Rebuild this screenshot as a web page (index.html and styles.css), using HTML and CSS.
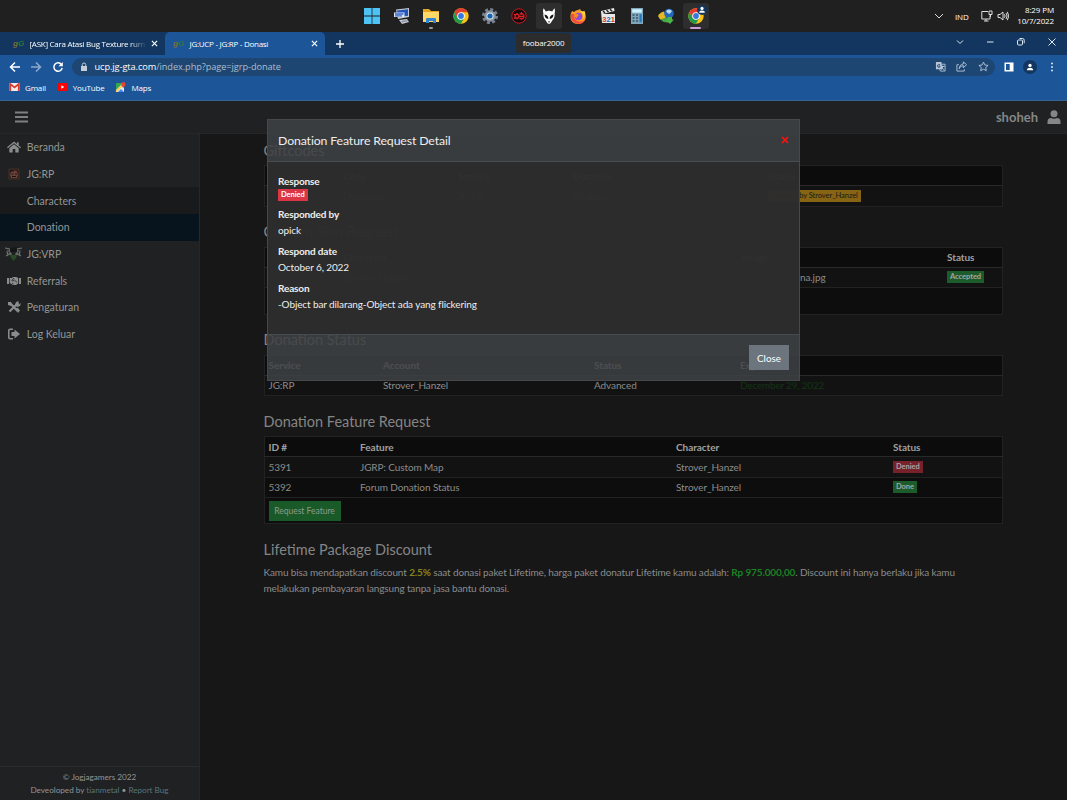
FILE: index.html
```html
<!DOCTYPE html>
<html lang="id">
<head>
  <meta charset="UTF-8">
  <meta name="viewport" content="width=device-width, initial-scale=1.0">
  <title>JG:UCP - JG:RP - Donasi</title>
  <link rel="stylesheet" href="styles.css">
</head>
<body>

<!-- Taskbar -->
<div class="taskbar">
  <div class="apps">
    <span class="app"><svg viewBox="0 0 16 16"><path fill="#4cc2f5" d="M0 0h7.6v7.6H0zM8.4 0H16v7.6H8.4zM0 8.4h7.6V16H0zM8.4 8.4H16V16H8.4z"/></svg></span>
    <span class="app"><svg viewBox="0 0 16 16"><path fill="#c5c9d2" d="M2 1.500l13-1.500v9l-11 2zM5 12l8-1 2 3-7 2z"/><path fill="#2454bd" d="M3 2.500l11-1.300v6.500L4 9z"/><path fill="#dfe6f5" d="M0 4.500h10.500V9H0z"/><path stroke="#3466c6" stroke-width="1.300" d="M1 6h8.500M1 7.800h7"/><path fill="#8d96a8" d="M7 13l6-1 .7 1.200-5.700 1.300z"/></svg></span>
    <span class="app"><svg viewBox="0 0 16 16"><path fill="#e8a51f" d="M0 1h6l2 2h8v5H0z"/><path fill="#ffd766" d="M0 4h16v10H0z"/><path fill="#3284d4" d="M3 15v-4q0-1 1-1h8q1 0 1 1v4h-3v-2H6v2z"/></svg><i class="running"></i></span>
    <span class="app"><svg viewBox="0 0 16 16"><use href="#chrome"/></svg></span>
    <span class="app"><svg viewBox="0 0 16 16"><circle cx="8" cy="8" r="6.6" fill="none" stroke="#75818f" stroke-width="2.8" stroke-dasharray="3 2.18"/><circle cx="8" cy="8" r="5.8" fill="#8793a0"/><circle cx="8" cy="8" r="3.5" fill="#e8eef4"/><circle cx="8" cy="8" r="2.6" fill="#1764ae"/></svg></span>
    <span class="app"><svg viewBox="0 0 16 16"><circle cx="8" cy="8" r="7.200" fill="#160a0b" stroke="#c41c23"/><g fill="none" stroke="#dc2228" stroke-width="1.300"><circle cx="6" cy="8.300" r="1.900"/><path d="M3 6.300l1.500.5M3 10.300l1.500-.6M6 5v1.500M6 10v1.600M7.500 8.300H13M8.500 6h4M8.500 10.500h4M10.500 4v2.500M10.500 10v1.800M12.800 6.500v3.500"/></g></svg></span>
    <span class="app open"><svg viewBox="0 0 16 16"><path fill="#fff" d="M2.700.3L4.800 3.500Q8 2.200 11.200 3.500L13.300.3Q14.500 2.500 13.600 5.500 14.300 9.500 11.300 12.500L9.500 15.300Q8 16.300 6.500 15.300L4.700 12.500Q1.700 9.500 2.400 5.500 1.500 2.500 2.700.3z"/><path fill="#151515" d="M3.500 6.500Q7.500 7 7.300 11 3.800 10.700 3.500 6.500zM12.500 6.500Q8.500 7 8.700 11 12.200 10.700 12.500 6.500zM7 13.400h2v.8H7z"/></svg></span>
    <span class="app"><svg viewBox="0 0 16 16"><path fill="#ff9a22" d="M2 3l2 1q2-2 4-2l2-1q0 2 2 3l2-1q3 5 1 9-2 4-7 4-5 0-7-4Q-.5 7 2 3z"/><path fill="#f34b42" d="M1 6q-1 8 7 10 5 0 7-4-4 3-8 1-4-2-3-7z"/><circle cx="8.500" cy="8.500" r="3.800" fill="#8b4ce0"/><path fill="#ffd43f" d="M10 1q0 3 2.500 4.500Q14 8 12.500 11q4-3 2-8l-1.500.5Q10.500 3 10 1z"/><path fill="#ff8a1f" d="M4 6q3-1 5 1-2 1-2 3-3-1-3-4z"/></svg></span>
    <span class="app"><svg viewBox="0 0 16 16"><path fill="#e8e8e8" d="M1 3l13-3 .5 3-12 3H15v9H2z"/><path stroke="#262626" stroke-width="1.500" d="M3 3l2 2M6.500 2l2 2M10 1.200l2 2"/><text x="2.300" y="13.500" class="clap"><tspan fill="#d23c2d">3</tspan><tspan fill="#2b67c2">2</tspan><tspan fill="#d23c2d">1</tspan></text></svg></span>
    <span class="app"><svg viewBox="0 0 16 16"><path fill="#7fa6bb" d="M2 0h12v16H2z"/><path fill="#cef0ff" d="M3.200 1.200h9.600v3.500H3.200z"/><path stroke="#37566c" stroke-width="1.700" stroke-dasharray="2 1.500" d="M3.500 7h6M3.500 10h6M3.500 13h6"/><path fill="#2378bb" d="M10.500 6.200h2.200v8h-2.200z"/></svg></span>
    <span class="app"><svg viewBox="0 0 16 16"><path fill="#e5b921" d="M0 8q2-4 6-4.500L9 9l-5 3Q1 11 0 8z"/><path fill="#4da446" d="M2 11q3 .5 5-1.500l5 1.500 1 3q-7 2-11-3z"/><circle cx="11" cy="5.500" r="4.800" fill="#2567b9"/><path fill="#b9dcf5" d="M8 3q3-3 6 0l-2 2.500q-2 1-4-2.500z"/><path fill="#49b64a" d="M9.500 9H14v2.500h2L12 16l-4.500-4.500h2z"/></svg></span>
    <span class="app open"><svg viewBox="0 0 16 16"><use href="#chrome"/></svg><b class="user-badge"><svg viewBox="0 0 10 10"><circle cx="5" cy="3" r="2" fill="#fff"/><path fill="#fff" d="M1.500 8.500q0-3 3.500-3t3.500 3z"/></svg></b><i class="running active"></i></span>
  </div>
  <div class="tray">
    <svg class="i-chev" viewBox="0 0 10 10"><path d="M1 3l4 4 4-4"/></svg>
    <span class="lang">IND</span>
    <svg class="i-net" viewBox="0 0 12 12"><path d="M7 1.500H.8v7.500H9V5.500M3 11h4.500M5 9v2M8 1h3v3.500H8zM9.500 4.500V7"/></svg>
    <svg class="i-vol" viewBox="0 0 12 12"><path d="M1 4.500h2L6 2v8L3 7.500H1zM7.500 4.300q1.200 1.700 0 3.400M9 3q2.300 3 0 6M10.300 1.800q3 4.200 0 8.400"/></svg>
    <div class="clock">8:29 PM<br>10/7/2022</div>
  </div>
  <div class="tooltip">foobar2000</div>
</div>

<!-- Browser -->
<div class="tabs">
  <div class="tab">
    <span class="favicon"><em>g</em>G</span>
    <span class="tab-title fade">[ASK] Cara Atasi Bug Texture rum</span>
    <svg class="x" viewBox="0 0 8 8"><path d="M1 1l6 6M7 1L1 7"/></svg>
  </div>
  <div class="tab current">
    <span class="favicon"><em>g</em>G</span>
    <span class="tab-title">JG:UCP - JG:RP - Donasi</span>
    <svg class="x" viewBox="0 0 8 8"><path d="M1 1l6 6M7 1L1 7"/></svg>
  </div>
  <svg class="plus" viewBox="0 0 10 10"><path d="M5 1v8M1 5h8"/></svg>
  <div class="win">
    <svg viewBox="0 0 10 10"><path d="M2 3.500l3 3 3-3"/></svg>
    <svg viewBox="0 0 10 10"><path d="M2 5h6.500"/></svg>
    <svg viewBox="0 0 10 10"><rect x="1.500" y="3" width="5" height="5" rx="1"/><path d="M3.500 1.500h3q1.700 0 1.700 1.700v3"/></svg>
    <svg viewBox="0 0 10 10"><path d="M1.500 1.500l7 7M8.500 1.500l-7 7"/></svg>
  </div>
</div>
<div class="toolbar">
  <svg class="nav" viewBox="0 0 12 12"><path d="M11 6H2M6 1.500L1.500 6 6 10.500"/></svg>
  <svg class="nav off" viewBox="0 0 12 12"><path d="M1 6h9M6 1.500L10.500 6 6 10.500"/></svg>
  <svg class="nav" viewBox="0 0 12 12"><path d="M9.500 3.500A4.200 4.200 0 1 0 10.200 7"/><path class="solid" d="M10.800 1v4.200H6.500z"/></svg>
  <div class="address">
    <svg class="lock" viewBox="0 0 8 10"><path fill="#c4ccd6" d="M1 4h6v5H1z"/><path fill="none" stroke="#c4ccd6" d="M2.300 4V2.500q0-1.500 1.700-1.500t1.700 1.500V4"/></svg>
    <span class="url"><b>ucp.jg-gta.com</b>/index.php?page=jgrp-donate</span>
    <svg class="act" viewBox="0 0 12 12"><path class="pale" d="M1 1h6l1 8H1z"/><path d="M7 3.500h4v7.500H6l-1-2M7 6h3.500M8.500 5v1q0 2-2 3.500M7.500 7q1 2 2.500 2.500"/><path stroke="#1c4777" d="M5.500 4H4Q2.500 4 2.700 5.500 3 7 4.500 7q1.200-.5 1-1.500H4.200"/></svg>
    <svg class="act" viewBox="0 0 12 12"><path d="M3 4H1v7h8V9M3.500 8.500Q4 5 8 5V7.500L11.500 4 8 1v2.200Q4 3.500 3.500 8.500z"/></svg>
    <svg class="act" viewBox="0 0 12 12"><path d="M6 1.200l1.500 3.200 3.500.4-2.600 2.300.7 3.500L6 8.900l-3.100 1.700.7-3.500L1 4.800l3.500-.4z"/></svg>
  </div>
  <svg class="tool" viewBox="0 0 10 10"><path fill="#fff" d="M.5.500h9v9h-9zM2 2v6h3.700V2z" fill-rule="evenodd"/></svg>
  <span class="profile"><svg viewBox="0 0 10 10"><circle cx="5" cy="3" r="2.100" fill="#fff"/><path fill="#fff" d="M1 9q0-3.200 4-3.200T9 9z"/></svg></span>
  <svg class="tool" viewBox="0 0 10 10"><path fill="#fff" d="M4.200.7h1.600v1.600H4.200zM4.200 4.200h1.600v1.600H4.200zM4.200 7.700h1.600v1.600H4.200z"/></svg>
</div>
<div class="bookmarks">
  <a><svg viewBox="0 0 11 10"><path fill="#eee" d="M.5 1h10v8H.5z"/><path fill="none" stroke="#dd3b30" stroke-width="1.700" d="M1.300 9V2l4.200 3.500L9.700 2v7"/></svg>Gmail</a>
  <a><svg viewBox="0 0 11 10"><rect y="1" width="11" height="8" rx="2" fill="#f00"/><path fill="#fff" d="M4.300 3.200v3.600l3-1.800z"/></svg>YouTube</a>
  <a><svg viewBox="0 0 11 10"><path fill="#e6e9ec" d="M1 1h8v9H1z"/><path fill="#35a652" d="M1 1h7L1 8z"/><path fill="#4284f4" d="M3 10l3-3 3 3z"/><path stroke="#ffca28" stroke-width="1.500" d="M1 9.500L8 2.500"/><path fill="#e94335" d="M8.300 6Q5.800 3.300 6.200 2q.5-2 2.200-2t2.200 2q.2 1.300-2.300 4z"/></svg>Maps</a>
</div>

<!-- Page -->
<div class="page">
  <div class="topbar">
    <svg class="burger" viewBox="0 0 13 12"><path fill="#7e8081" d="M0 .5h13v2H0zM0 5h13v2H0zM0 9.500h13v2H0z"/></svg>
    <div class="account">shoheh <svg viewBox="0 0 14 14"><circle cx="7" cy="3.700" r="3.500"/><path d="M.5 14v-2q0-4 3.500-4 3 1.300 6 0 3.500 0 3.500 4v2z"/></svg></div>
  </div>

  <div class="main">
    <div class="sidebar">
      <ul class="menu">
        <li><svg viewBox="0 0 14 12"><path d="M7 .500L0 6.300l.8 1L7 2.200l6.200 5.100.8-1-2.300-1.900V1.200H10V3zM7 3.300L2.300 7.200V11.500H5.700V8h2.600v3.500h3.400V7.200z"/></svg>Beranda</li>
        <li><svg viewBox="0 0 14 12"><path fill="#301b16" stroke="#553a31" stroke-width=".7" d="M2 1h10v10H2z"/><path fill="#68443a" d="M4 3.500q3-2 6 0l1 3-1 3.500H4L3 6.500z"/><path stroke="#1c1110" d="M3 3h4M4.500 6h2M8 6h2M5 8.500h4"/></svg>JG:RP</li>
        <li class="sub">Characters</li>
        <li class="sub selected">Donation</li>
        <li><svg class="wide" viewBox="0 0 17 14"><path fill="none" stroke="#747474" stroke-width="1.200" d="M0 1l5 1 4 1 3-1 5-1M1.500 4h4M11 4h4.500M2 5l1 3-2 1M15 5l-1 3 2 1M3 7h4M10 7h4M5 2v6M12 2v6"/><path fill="#141816" d="M5 1l7-1v5H5z"/><path fill="#294a26" d="M5 8h7l-1 3-2.500 3L6 11z"/></svg>JG:VRP</li>
        <li><svg viewBox="0 0 14 12"><path d="M0 3h2v6H0zM12 3h2v6h-2zM2.700 3h2l1.500-1h3l2 1v5.500L9 10H6L2.700 8z"/><path fill="none" stroke="#202223" stroke-width=".8" d="M7 3L4.800 5.500q1 1.200 2.700-.4L10 7.500M5 8l1.500 1"/></svg>Referrals</li>
        <li><svg viewBox="0 0 14 12"><path fill="none" stroke="#8b8c8c" stroke-width="2.200" d="M2.500 1.500l8 8.500M11.500 1.500l-9 9"/><path d="M9 1l3-1-1.500 2L12 3.500 14 2l-1 3-3 1-2-2zM1 1h3l1 3-1 1-3-1zM8.500 8l2-1.500L13 9.500 11 12z"/></svg>Pengaturan</li>
        <li><svg viewBox="0 0 14 12"><path d="M6 2H3.500Q2.500 2 2.500 3v6q0 1 1 1H6v1.500H3Q1 11.500 1 9.500v-7Q1 .5 3 .5h3zM7.500 1.500l5.500 4.500-5.500 4.500V8H4.500V4h3z"/></svg>Log Keluar</li>
      </ul>
      <div class="credits">© Jogjagamers 2022<br>Deveoloped by <a>tianmetal</a> • <a>Report Bug</a></div>
    </div>

    <div class="content">
      <h4>Giftcodes</h4>
      <table>
        <colgroup><col class="w75"><col class="w115"><col class="w115"><col class="w195"><col></colgroup>
        <tr><th></th><th>Code</th><th>Service</th><th>Duration</th><th>Status</th></tr>
        <tr><td></td><td>Donation</td><td>JG:RP</td><td>30 days</td><td><span class="badge yellow">Claimed by Strover_Hanzel</span></td></tr>
      </table>

      <h4>Custom Skin Request</h4>
      <table>
        <colgroup><col class="w75"><col class="w115"><col class="w284"><col class="w205"><col></colgroup>
        <tr><th></th><th>Character</th><th></th><th>Image</th><th>Status</th></tr>
        <tr><td></td><td>Strover_Hanzel</td><td></td><td class="file">na.jpg</td><td><span class="badge green">Accepted</span></td></tr>
        <tr class="foot"><td colspan="5"></td></tr>
      </table>

      <h4>Donation Status</h4>
      <table>
        <colgroup><col class="w115"><col class="w211"><col class="w146"><col></colgroup>
        <tr><th>Service</th><th>Account</th><th>Status</th><th>Expire</th></tr>
        <tr><td>JG:RP</td><td>Strover_Hanzel</td><td>Advanced</td><td class="expire">December 29, 2022</td></tr>
      </table>

      <h4>Donation Feature Request</h4>
      <table>
        <colgroup><col class="w92"><col class="w316"><col class="w217"><col></colgroup>
        <tr><th>ID #</th><th>Feature</th><th>Character</th><th>Status</th></tr>
        <tr><td>5391</td><td>JGRP: Custom Map</td><td>Strover_Hanzel</td><td><span class="badge red">Denied</span></td></tr>
        <tr class="alt"><td>5392</td><td>Forum Donation Status</td><td>Strover_Hanzel</td><td><span class="badge green">Done</span></td></tr>
        <tr class="foot"><td colspan="4"><button class="request">Request Feature</button></td></tr>
      </table>

      <h4>Lifetime Package Discount</h4>
      <p>Kamu bisa mendapatkan discount <b class="percent">2.5%</b> saat donasi paket Lifetime, harga paket donatur Lifetime kamu adalah: <b class="price">Rp 975.000,00</b>. Discount ini hanya berlaku jika kamu<br>melakukan pembayaran langsung tanpa jasa bantu donasi.</p>
    </div>
  </div>

  <!-- Request detail -->
  <div class="modal">
    <div class="modal-header">
      <h5>Donation Feature Request Detail</h5>
      <svg viewBox="0 0 8 8"><path d="M1 1l6 6M7 1L1 7"/></svg>
    </div>
    <div class="modal-body">
      <dl>
        <dt>Response</dt><dd class="tag"><span class="badge denied">Denied</span></dd>
        <dt>Responded by</dt><dd>opick</dd>
        <dt>Respond date</dt><dd>October 6, 2022</dd>
        <dt>Reason</dt><dd>-Object bar dilarang-Object ada yang flickering</dd>
      </dl>
    </div>
    <div class="modal-footer"><button class="close">Close</button></div>
  </div>
</div>

<!-- Shared icon -->
<svg width="0" height="0" class="defs">
  <symbol id="chrome" viewBox="0 0 16 16">
    <circle cx="8" cy="8" r="7.700" fill="#fbc116"/>
    <path fill="#e33b2e" d="M1.300 4.200A7.700 7.700 0 0 1 14.700 4.200H8L4.700 9.900z"/>
    <path fill="#229a4c" d="M1.300 4.200A7.700 7.700 0 0 0 7.900 15.700L11.300 10 8 11.800 4.700 9.900z"/>
    <circle cx="8" cy="8" r="3.800" fill="#fff"/><circle cx="8" cy="8" r="2.900" fill="#3478e0"/>
  </symbol>
</svg>

</body>
</html>
```
FILE: styles.css
```css
* {
  box-sizing: border-box;
}
body {
  margin: 0;
  width: 1067px;
  height: 800px;
  overflow: hidden;
  background: #171717;
  color: #8b8b8b;
  font-family: "Lato", sans-serif;
  font-size: 10px;
}
svg {
  display: block;
  flex: none;
}
.defs {
  position: absolute;
}

/* Taskbar */
.taskbar {
  position: relative;
  height: 32px;
  background: #202020;
  color: #fff;
  font-family: "Open Sans", sans-serif;
  font-size: 8px;
  letter-spacing: -0.15px;
}
.apps {
  display: flex;
  height: 32px;
  align-items: center;
  padding-left: 359.3px;
}
.app {
  position: relative;
  display: flex;
  width: 26.4px;
  height: 26px;
  margin-right: 3px;
  align-items: center;
  justify-content: center;
  border-radius: 3px;
}
.app svg {
  width: 16px;
  height: 16px;
}
.open {
  background: #2e2e2e;
}
.running {
  position: absolute;
  bottom: 0;
  width: 4px;
  height: 2px;
  border-radius: 1px;
  background: #999;
}
.running.active {
  width: 11px;
  background: #c9a0d8;
}
.user-badge {
  position: absolute;
  right: 2px;
  top: 2px;
  padding: 1px;
  border-radius: 50%;
  background: #12375f;
}
.app .user-badge svg {
  width: 8px;
  height: 8px;
}
.clap {
  font: bold 7.5px "Liberation Sans", sans-serif;
  letter-spacing: 0;
}
.tray {
  position: absolute;
  right: 13px;
  top: 0;
  height: 32px;
  display: flex;
  align-items: center;
}
.tray svg {
  fill: none;
  stroke: #ddd;
}
.i-chev {
  width: 10px;
  margin-right: 11px;
}
.lang {
  width: 26px;
}
.i-net {
  width: 12px;
  margin-right: 4px;
}
.i-vol {
  width: 12px;
}
.clock {
  width: 45px;
  line-height: 10.5px;
  text-align: right;
  padding-bottom: 1px;
  letter-spacing: -0.12px;
}
.tooltip {
  position: absolute;
  z-index: 2;
  left: 516px;
  top: 33px;
  width: 55px;
  height: 20px;
  border-radius: 3px;
  background: #2c2c2c;
  line-height: 19px;
  text-align: center;
}

/* Browser */
.tabs {
  display: flex;
  align-items: center;
  height: 23px;
  background: #12365f;
  color: #dfe8f2;
  font: 8px "Open Sans", sans-serif;
}
.tab {
  display: flex;
  align-items: center;
  width: 165px;
  height: 21px;
  padding: 0 7px 0 13px;
}
.current {
  width: 160px;
  height: 23px;
  padding-left: 8px;
  border-radius: 5px 5px 0 0;
  background: #1d5599;
}
.favicon {
  width: 16.5px;
  color: #2f7535;
  font: italic bold 8px "Liberation Sans", sans-serif;
}
.favicon em {
  color: #70703e;
}
.tab-title {
  width: 117.5px;
  white-space: nowrap;
  color: #fff;
  letter-spacing: -0.27px;
}
.current .tab-title {
  width: 121.5px;
}
.fade {
  -webkit-mask-image: linear-gradient(90deg, #000 85%, transparent);
  mask-image: linear-gradient(90deg, #000 85%, transparent);
}
.x {
  width: 7px;
  margin-left: 4px;
  stroke: #fff;
  stroke-width: 1.3;
}
.current .x {
  margin-left: 0;
}
.plus {
  width: 10px;
  margin-left: 9.5px;
  stroke: #fff;
  stroke-width: 1.3;
}
.win {
  display: flex;
  gap: 20.6px;
  margin-left: auto;
  margin-right: 10.5px;
  padding-bottom: 3px;
}
.win svg {
  width: 10px;
  fill: none;
  stroke: #dfe8f2;
}
.toolbar {
  display: flex;
  align-items: center;
  height: 24px;
  background: #1d5599;
  padding: 0 0 1px 8.5px;
}
.nav {
  width: 12px;
  margin-right: 9.5px;
  fill: none;
  stroke: #fff;
  stroke-width: 1.5;
}
.nav .solid {
  fill: #fff;
  stroke: none;
}
.off {
  opacity: .5;
}
.address {
  display: flex;
  align-items: center;
  width: 923px;
  height: 18px;
  margin-left: -1.5px;
  margin-right: 9px;
  padding: 0 6px 0 8px;
  border-radius: 9px;
  background: #1d4673;
}
.lock {
  width: 8px;
  margin-right: 7px;
}
.url {
  flex: 1;
  color: #aebdcd;
  font: 9.2px "Open Sans", sans-serif;
  letter-spacing: -0.06px;
}
.url b {
  color: #fff;
  font-weight: 400;
}
.act {
  width: 11px;
  margin-left: 10.5px;
  fill: none;
  stroke: #b5c5d7;
}
.act .pale {
  fill: #b5c5d7;
  stroke: none;
}
.tool {
  width: 10px;
}
.profile {
  margin: 0 9.5px;
  padding: 3px;
  border-radius: 50%;
  background: #12365f;
}
.profile svg {
  width: 8px;
}
.bookmarks {
  display: flex;
  height: 22px;
  padding: 0 0 5px 9px;
  background: #1d5599;
  border-bottom: 1px solid #336494;
  color: #fff;
  font: 8px "Open Sans", sans-serif;
  letter-spacing: -0.18px;
}
.bookmarks a {
  display: flex;
  align-items: center;
  margin-right: 11px;
}
.bookmarks svg {
  width: 11px;
  margin-right: 5px;
}

/* Page */
.page {
  position: relative;
  height: 699px;
}
.topbar {
  display: flex;
  align-items: center;
  justify-content: space-between;
  height: 33px;
  padding: 0 6px 0 15px;
  background: #1f2122;
  border-bottom: 1px solid #252728;
}
.burger {
  width: 13px;
}
.account {
  display: flex;
  align-items: center;
  gap: 9px;
  color: #858687;
  font-size: 13px;
  font-weight: 700;
}
.account svg {
  width: 14px;
  fill: #858687;
}
.main {
  display: flex;
  height: 666px;
}
.sidebar {
  display: flex;
  flex-direction: column;
  justify-content: space-between;
  width: 200px;
  background: #1f2122;
  border-right: 1px solid #252728;
  color: #949595;
}
.menu {
  margin: 0;
  padding: 0;
  list-style: none;
  font-size: 10.5px;
  letter-spacing: -0.03px;
}
.menu li {
  display: flex;
  align-items: center;
  height: 26.7px;
  padding-left: 6.5px;
}
.menu svg {
  width: 14px;
  margin-right: 6.3px;
  fill: #8b8c8c;
}
.menu .wide {
  width: 17px;
  margin-left: -2px;
  margin-right: 5.3px;
}
.menu .sub {
  padding-left: 26.8px;
  background: #191a1b;
}
.menu .selected {
  background: #07141e;
}
.credits {
  height: 34px;
  padding-top: 3.5px;
  border-top: 1px solid #292b2c;
  font-size: 8.2px;
  letter-spacing: -0.03px;
  line-height: 13.3px;
  text-align: center;
}
.credits a {
  color: #58757c;
}
.content {
  width: 740px;
  margin-left: 63.5px;
}
h4 {
  margin: 15.5px 0 4.5px;
  color: #858585;
  font-size: 14.5px;
  font-weight: 400;
  line-height: 20px;
}
h4:first-child {
  margin-top: 6.5px;
}
table {
  width: 739.5px;
  table-layout: fixed;
  border-collapse: collapse;
  border: 1px solid #222;
  letter-spacing: -0.1px;
}
tr {
  height: 20.25px;
  background: #121212;
}
tr:first-child {
  background: #0c0c0c;
  border-bottom: 1px solid #292929;
}
tr.alt, tr.foot {
  background: #0d0d0d;
  border-top: 1px solid #222;
}
tr.foot {
  height: 26.5px;
}
th, td {
  padding: 1px 0 0 4px;
  text-align: left;
  white-space: nowrap;
  line-height: 13px;
}
.foot td {
  padding-top: 0;
}
th {
  color: #a0a0a0;
  letter-spacing: -0.05px;
}
.w75 { width: 75px; }
.w92 { width: 92px; }
.w115 { width: 115px; }
.w146 { width: 146px; }
.w195 { width: 195px; }
.w205 { width: 205px; }
.w211 { width: 211px; }
.w217 { width: 217px; }
.w284 { width: 284px; }
.w316 { width: 316px; }
td.file {
  padding-left: 62px;
}
.expire {
  color: #123514;
  letter-spacing: -0.2px;
}
.badge {
  display: inline-block;
  height: 12px;
  padding: 0 3px;
  color: #a5a5a5;
  font-size: 7.5px;
  font-weight: 700;
  line-height: 12px;
  letter-spacing: -0.05px;
  vertical-align: top;
}
.green {
  background: #1b5c2a;
}
.red {
  background: #77212a;
}
.yellow {
  background: #866414;
  color: #191919;
  font-weight: 400;
}
.denied {
  background: #dc3545;
  color: #fff;
}
button {
  border: 0;
  padding: 0;
  font-family: inherit;
}
.request {
  display: block;
  width: 72px;
  height: 20px;
  background: #1a5928;
  color: #8b9b8e;
  font-size: 8.5px;
}
p {
  margin: 0;
  line-height: 16px;
  letter-spacing: -0.13px;
  white-space: nowrap;
}
.percent {
  color: #85851c;
}
.price {
  color: #198223;
}

/* Modal */
.modal {
  position: absolute;
  left: 266.5px;
  top: 18px;
  width: 533.5px;
  height: 262px;
  border: 1px solid #46484a;
  color: #eee;
}
.modal-header {
  display: flex;
  align-items: center;
  justify-content: space-between;
  height: 42px;
  padding: 0 10.5px;
  background: rgba(62, 66, 68, .87);
  border-bottom: 1px solid #4a4d4f;
}
.modal-header svg {
  width: 8px;
  margin-bottom: 2px;
  stroke: #f11;
  stroke-width: 1.7;
}
h5 {
  margin: 0;
  font-size: 12.3px;
  font-weight: 400;
  letter-spacing: -0.13px;
}
.modal-body {
  height: 172px;
  padding: 10.5px 10.5px;
  background: rgba(45, 45, 45, .98);
}
dl {
  margin: 0;
}
dt {
  font-weight: 700;
  line-height: 16px;
  letter-spacing: -0.15px;
}
dd {
  margin: 0 0 5.3px;
  line-height: 16px;
  letter-spacing: -0.11px;
}
dd.tag {
  height: 12px;
}
.modal-footer {
  display: flex;
  align-items: center;
  justify-content: flex-end;
  height: 46px;
  padding: 0 10px;
  background: rgba(62, 66, 68, .87);
  border-top: 1px solid #484b4d;
}
.close {
  width: 40px;
  height: 25px;
  background: #6c757d;
  color: #fff;
  font-size: 9.8px;
}
```
